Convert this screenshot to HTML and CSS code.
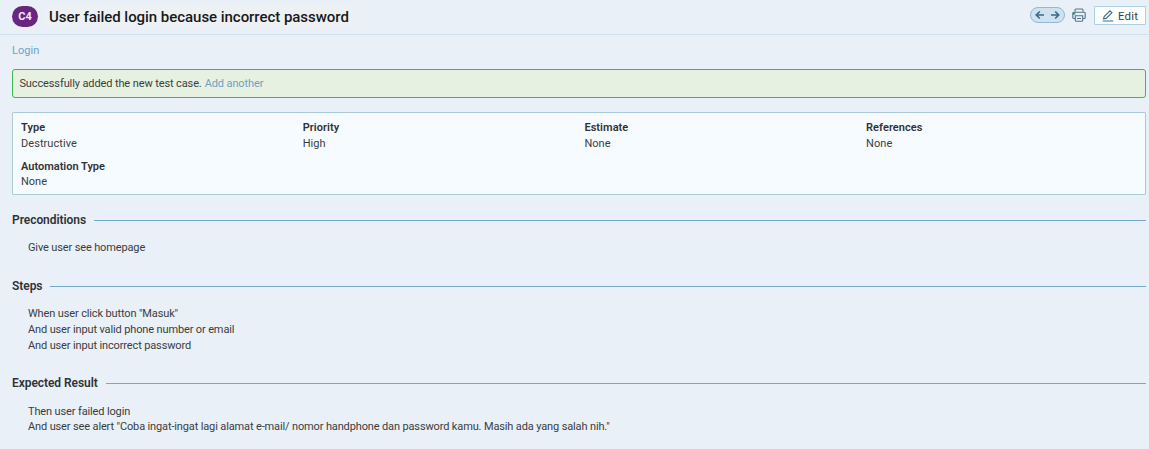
FILE: index.html
```html
<!DOCTYPE html>
<html lang="en">
<head>
<meta charset="utf-8">
<title>User failed login because incorrect password</title>
<link rel="stylesheet" href="styles.css">
</head>
<body>
<header class="header">
  <span class="badge">C4</span>
  <h1 class="title">User failed login because incorrect password</h1>
  <div class="tools">
    <div class="pager">
      <svg width="10" height="10" viewBox="0 0 10 10"><path d="M9 5H1.400M4.800 1.500L1.300 5l3.500 3.500"/></svg>
      <svg width="10" height="10" viewBox="0 0 10 10"><path d="M1 5h7.600M5.200 1.500L8.700 5 5.200 8.500"/></svg>
    </div>
    <svg class="print" width="14" height="14" viewBox="0 0 14 14"><path d="M3 3.500V2Q3 1 4 1h6q1 0 1 1v1.500M3 10.500H1.800Q.8 10.500.8 9.500V5.200Q.8 4.200 1.800 4.200H12.200Q13.200 4.200 13.200 5.200V9.500Q13.200 10.500 12.200 10.500H11M3.300 7.800h7.400v4.400q0 1-1 1H4.300q-1 0-1-1zM5 10.500h4"/><path class="print-dot" d="M.8 5.700h2.500"/></svg>
    <button class="edit">
      <svg width="12" height="12" viewBox="0 0 12 12"><path d="M1.500 8.800L2.200 6.500 8 .8l1.900 1.900-5.700 5.700zM.7 11h10.600"/></svg>
      <span>Edit</span>
    </button>
  </div>
</header>
<main class="content">
  <nav class="crumb"><a class="link">Login</a></nav>
  <div class="alert"><span>Successfully added the new test case.</span><a class="link">Add another</a></div>
  <dl class="props">
    <div class="prop"><dt>Type</dt><dd>Destructive</dd></div>
    <div class="prop"><dt>Priority</dt><dd>High</dd></div>
    <div class="prop"><dt>Estimate</dt><dd>None</dd></div>
    <div class="prop"><dt>References</dt><dd>None</dd></div>
    <div class="prop prop-last"><dt>Automation Type</dt><dd>None</dd></div>
  </dl>
  <section class="pre">
    <h2 class="heading">Preconditions</h2>
    <div class="body"><p>Give user see homepage</p></div>
  </section>
  <section class="steps">
    <h2 class="heading">Steps</h2>
    <div class="body"><p>When user click button "Masuk"</p><p>And user input valid phone number or email</p><p>And user input incorrect password</p></div>
  </section>
  <section class="expected">
    <h2 class="heading">Expected Result</h2>
    <div class="body"><p>Then user failed login</p><p class="last-line">And user see alert "Coba ingat-ingat lagi alamat e-mail/ nomor handphone dan password kamu. Masih ada yang salah nih."</p></div>
  </section>
</main>
</body>
</html>
```
FILE: styles.css
```css
* { box-sizing: border-box; }
body { margin: 0; height: 449px; overflow: hidden; background: #e9f0f8; color: #3a3d40; font: 11px/16px Roboto, "Liberation Sans", sans-serif; letter-spacing: .06px; }
h1, h2, p, dl, dt, dd { margin: 0; }
.header { display: flex; height: 35px; padding: 0 3px 0 12px; border-bottom: 1px solid #cfe1ec; }
.badge { width: 26px; height: 21px; margin-top: 6px; border-radius: 11px; background: #68267e; color: #f0e6f4; font-size: 11px; font-weight: 700; line-height: 22px; text-align: center; letter-spacing: 0; }
.title { height: 22px; margin: 5px 0 0 7px; padding: 0 4px; background: #edf1f4; color: #17191b; font-size: 15px; font-weight: 500; line-height: 24px; white-space: nowrap; letter-spacing: -.04px; }
.tools { display: flex; margin-left: auto; }
.pager { display: flex; align-items: center; justify-content: space-between; width: 35px; height: 16px; margin-top: 7px; padding: 0 4px; border: 1px solid #91b9d2; border-radius: 8px; background: #cfe2ef; }
svg { display: block; fill: none; stroke: #396b8b; stroke-width: 1.1; }
.pager svg { stroke-width: 1.7; }
.print { margin: 8px 8px 0 7px; stroke: #527487; }
.print .print-dot { stroke: #18a058; stroke-width: 1.7; }
.edit { display: flex; align-items: center; width: 52px; height: 19px; margin: 6px 0 0; padding: 0 0 0 7px; gap: 4px; border: 1px solid #afcfe3; border-radius: 1px; background: #fff; color: #35434d; font: 11.5px/17px Roboto, sans-serif; letter-spacing: .15px; }
.edit svg { width: 12px; height: 12px; }
.edit span { padding-top: 1px; }
.content { padding: 8px 3px 0 12px; }
.crumb { height: 26px; letter-spacing: .08px; }
.link { color: #6fa1c6; }
.alert { display: flex; gap: 3px; height: 29px; padding: 0 6.4px; border: 1px solid #3fb650; border-radius: 3px; background: #e7f1e1; line-height: 27px; letter-spacing: -.11px; }
.props { display: grid; grid-template-columns: repeat(4, 281.7px); grid-template-rows: 39px 39px; height: 83px; margin-top: 14px; padding: 7px 0 0 8px; border: 1px solid #acc9dc; border-radius: 1px; background: #f6fbff; }
dt { height: 16px; font-weight: 600; color: #303336; }
.prop-last { letter-spacing: 0; }
.prop-last dt { height: 15px; }
.pre { height: 66px; margin-top: 17px; }
.steps { height: 97px; }
.heading { display: flex; align-items: center; gap: 8px; height: 16px; font-size: 12px; font-weight: 600; color: #303336; line-height: 16px; letter-spacing: -.06px; }
.heading::after { content: ""; flex: 1; height: 1px; margin-top: 1px; background: #75a9ca; }
.body { padding: 12px 0 0 16px; letter-spacing: -.135px; }
.expected .body { padding-top: 13px; }
.last-line { margin-top: -1px; }
```
